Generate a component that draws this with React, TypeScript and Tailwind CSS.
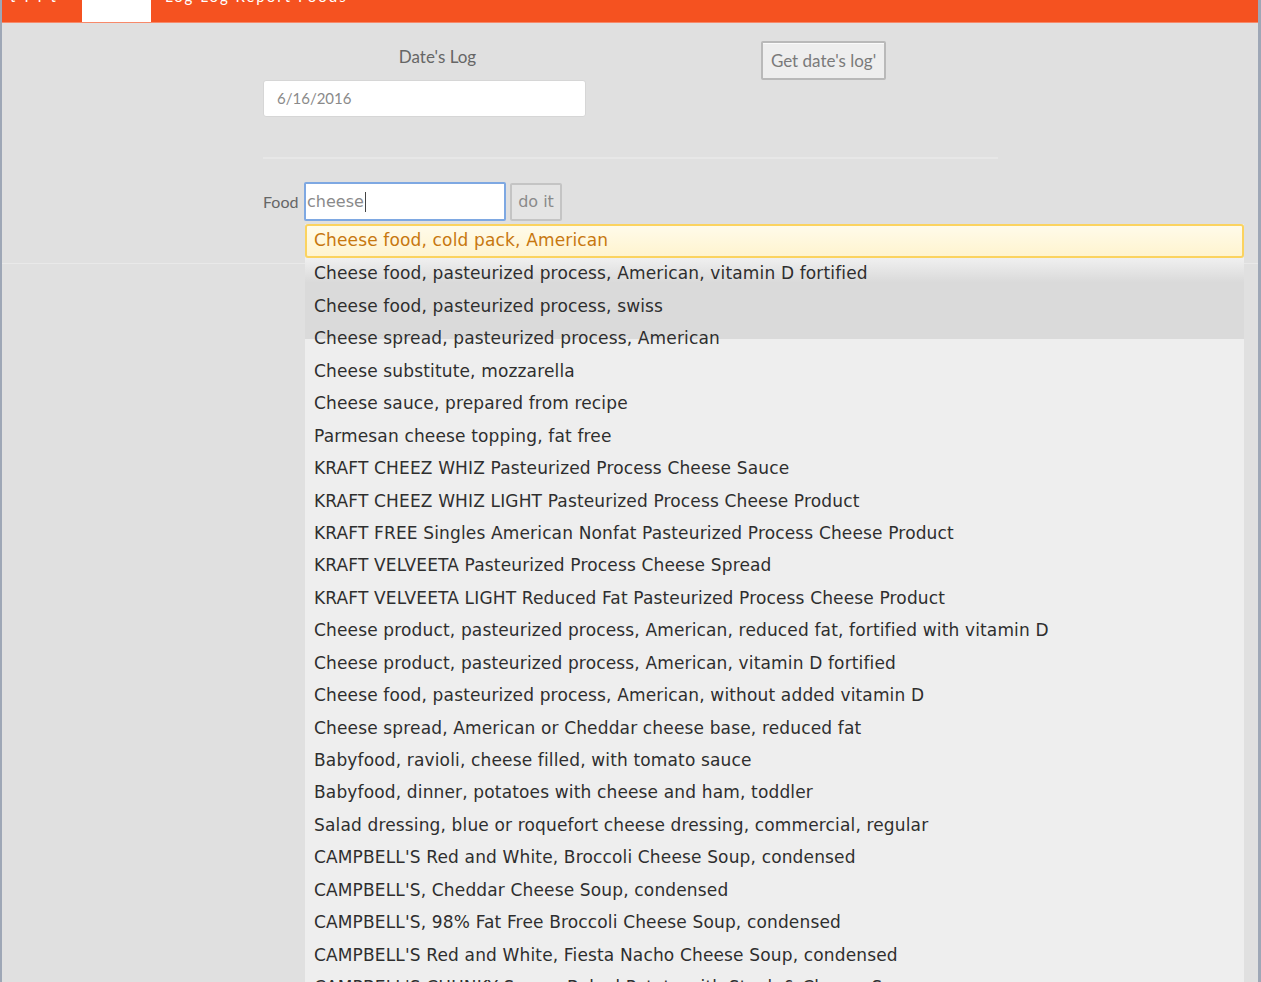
import React from "react";

const foods = [
  "Cheese food, pasteurized process, American, vitamin D fortified",
  "Cheese food, pasteurized process, swiss",
  "Cheese spread, pasteurized process, American",
  "Cheese substitute, mozzarella",
  "Cheese sauce, prepared from recipe",
  "Parmesan cheese topping, fat free",
  "KRAFT CHEEZ WHIZ Pasteurized Process Cheese Sauce",
  "KRAFT CHEEZ WHIZ LIGHT Pasteurized Process Cheese Product",
  "KRAFT FREE Singles American Nonfat Pasteurized Process Cheese Product",
  "KRAFT VELVEETA Pasteurized Process Cheese Spread",
  "KRAFT VELVEETA LIGHT Reduced Fat Pasteurized Process Cheese Product",
  "Cheese product, pasteurized process, American, reduced fat, fortified with vitamin D",
  "Cheese product, pasteurized process, American, vitamin D fortified",
  "Cheese food, pasteurized process, American, without added vitamin D",
  "Cheese spread, American or Cheddar cheese base, reduced fat",
  "Babyfood, ravioli, cheese filled, with tomato sauce",
  "Babyfood, dinner, potatoes with cheese and ham, toddler",
  "Salad dressing, blue or roquefort cheese dressing, commercial, regular",
  "CAMPBELL'S Red and White, Broccoli Cheese Soup, condensed",
  "CAMPBELL'S, Cheddar Cheese Soup, condensed",
  "CAMPBELL'S, 98% Fat Free Broccoli Cheese Soup, condensed",
  "CAMPBELL'S Red and White, Fiesta Nacho Cheese Soup, condensed",
  "CAMPBELL'S CHUNKY Soups, Baked Potato with Steak & Cheese Soup",
];

const lato = { fontFamily: "Lato, 'Open Sans', sans-serif" };
const menuFont = { fontFamily: "'DejaVu Sans', Verdana, sans-serif" };

function Item({ text }: { text: string }) {
  return (
    <div className="h-[32.45px] flex items-center pl-[9px] text-[17px] text-[#2e2e2e] tracking-[0.15px] whitespace-nowrap">
      {text}
    </div>
  );
}

export default function App() {
  return (
    <div className="relative h-[982px] w-full overflow-hidden bg-[#e0e0e0] border-l-2 border-r-[3px] border-[#9ea7b6]">
      {/* top nav bar, labels mostly scrolled out of view */}
      <div className="h-[23px] bg-[#f55220] flex border-b border-[#f7896a] text-white text-[15px] overflow-hidden whitespace-nowrap" style={lato}>
        <div className="w-[80px] pl-[8px] -mt-[15px] tracking-[9px]">tIIt</div>
        <div className="w-[69px] bg-white" />
        <div className="pl-[14px] -mt-[15px] tracking-[2px]">Log Log Report Foods</div>
      </div>

      {/* date section */}
      <div className="pl-[261px] border-b border-[#e9e9e9] pb-[42px]">
        <div className="flex">
          <div className="w-[323px] flex flex-col">
            <div className="mt-[24px] pl-[26px] text-center text-[17px] leading-[20px] text-[#666]" style={lato}>
              Date's Log
            </div>
            <div className="mt-[13px] h-[37px] bg-white rounded-[3px] border border-[#d6d6d6] flex items-center pl-[13px] text-[15px] text-[#8a8a8a]" style={lato}>
              6/16/2016
            </div>
          </div>
          <button
            className="ml-[175px] mt-[18px] h-[39px] w-[125px] bg-[#eeeeee] border-2 border-[#b9b9b9] rounded-[2px] text-[17px] text-[#7a7a7a] shadow-[inset_0_1px_0_#fafafa]"
            style={lato}
          >
            Get date's log'
          </button>
        </div>

        <div className="mt-[40px] w-[735px] h-[2px] bg-[#e7e7e7]" />

        <div className="mt-[23px] flex items-center">
          <span className="text-[16px] text-[#666] w-[41px]" style={lato}>Food</span>
          <div
            className="h-[39px] w-[202px] bg-white border-2 border-[#7ea8e2] rounded-[2px] flex items-center pl-[1px] text-[16px] text-[#8a8a8a]"
            style={menuFont}
          >
            cheese<span className="ml-[1px] h-[20px] w-px bg-[#444]" />
          </div>
          <button
            className="ml-[4px] h-[38px] w-[52px] bg-[#e4e4e4] border-2 border-[#c4c4c4] rounded-[2px] text-[16px] text-[#8a8a8a]"
            style={menuFont}
          >
            do it
          </button>
        </div>
      </div>

      {/* autocomplete menu */}
      <div className="absolute left-[303px] top-[224px] w-[939px] bg-[#eeeeee]" style={menuFont}>
        <div className="h-[34px] border-2 border-[#fbd35f] rounded-[3px] bg-gradient-to-b from-[#fffbea] to-[#fff4cf] flex items-center pl-[7px] text-[17px] text-[#c7770f] tracking-[0.15px]">
          Cheese food, cold pack, American
        </div>
        <div className="bg-[linear-gradient(to_bottom,#f0f0f0_0%,#dadada_25%,#dadada_83%,#eeeeee_83%)]">
          <Item text={foods[0]} />
          <Item text={foods[1]} />
          <Item text={foods[2]} />
        </div>
        {foods.slice(3).map((f) => (
          <Item key={f} text={f} />
        ))}
      </div>
    </div>
  );
}
